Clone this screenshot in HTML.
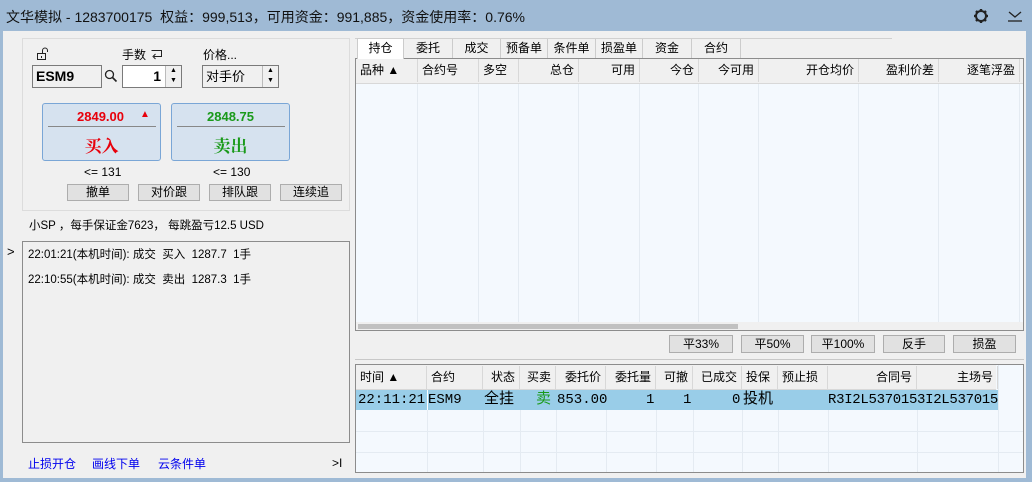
<!DOCTYPE html><html><head><meta charset="utf-8"><style>
*{margin:0;padding:0;box-sizing:border-box}
body{width:1032px;height:482px;background:#9fbad5;font-family:"Liberation Sans","Noto Sans CJK SC",sans-serif;font-size:12px;color:#000;position:relative;overflow:hidden}
.a{position:absolute}
#main{left:3px;top:31px;width:1023px;height:447px;background:#f0f0f0}
.btn{position:absolute;background:#e1e1e1;border:1px solid #adadad;text-align:center;font-size:12px;line-height:15px}
.hdr{position:absolute;height:23px;line-height:23px;border-right:1px solid #d8d8d8;padding:0 4px;white-space:nowrap}
.vl{position:absolute;width:1px;background:#e4ebf2}
.hl{position:absolute;height:1px;background:#e4ebf2}
.mono{font-family:"Liberation Mono","Noto Sans CJK SC",monospace;font-size:14px}
</style></head><body>
<div class="a" style="left:6px;top:7px;font-size:14px;color:#111">文华模拟 - 1283700175&nbsp; 权益：999,513，可用资金：991,885，资金使用率：0.76%</div>
<svg class="a" style="left:972px;top:7px" width="18" height="18" viewBox="0 0 18 18"><circle cx="9" cy="9" r="5" fill="none" stroke="#222" stroke-width="2"/><g stroke="#222" stroke-width="2.4"><line x1="9" y1="2" x2="9" y2="4"/><line x1="9" y1="14" x2="9" y2="16"/><line x1="2" y1="9" x2="4" y2="9"/><line x1="14" y1="9" x2="16" y2="9"/><line x1="4" y1="4" x2="5.4" y2="5.4"/><line x1="12.6" y1="12.6" x2="14" y2="14"/><line x1="14" y1="4" x2="12.6" y2="5.4"/><line x1="4" y1="14" x2="5.4" y2="12.6"/></g></svg>
<svg class="a" style="left:1007px;top:9px" width="16" height="14" viewBox="0 0 16 14"><path d="M2 3 L8 8 L14 3" fill="none" stroke="#222" stroke-width="1.3"/><line x1="1" y1="12" x2="15" y2="12" stroke="#222" stroke-width="1.3"/></svg>
<div class="a" id="main"></div>

<div class="a" style="left:22px;top:38px;width:328px;height:173px;border:1px solid #dcdcdc"></div>
<svg class="a" style="left:36px;top:47px" width="14" height="14" viewBox="0 0 14 14"><rect x="1.5" y="6.5" width="8" height="6" fill="none" stroke="#222"/><path d="M6.5 6.5 V3.5 a2.5 2.5 0 0 1 5 0 V5" fill="none" stroke="#222"/><rect x="5" y="9" width="1" height="2" fill="#222"/></svg>
<div class="a" style="left:122px;top:46px">手数</div>
<svg class="a" style="left:150px;top:49px" width="13" height="12" viewBox="0 0 13 12"><path d="M1.5 1.5 H11.5 V7.5 H4" fill="none" stroke="#222"/><path d="M5.5 5 L3 7.5 L5.5 10" fill="none" stroke="#222"/></svg>
<div class="a" style="left:203px;top:46px">价格...</div>
<div class="a" style="left:32px;top:65px;width:70px;height:23px;border:1px solid #7a7a7a;background:#f0f0f0;font-weight:bold;font-size:14px;line-height:21px;padding-left:3px">ESM9</div>
<svg class="a" style="left:104px;top:69px" width="14" height="14" viewBox="0 0 14 14"><circle cx="5.5" cy="5.5" r="4" fill="none" stroke="#222" stroke-width="1.3"/><line x1="8.5" y1="8.5" x2="12.5" y2="12.5" stroke="#222" stroke-width="1.6"/></svg>
<div class="a" style="left:122px;top:65px;width:60px;height:23px;border:1px solid #7a7a7a;background:#fff;font-weight:bold;font-size:14px;line-height:21px"><span style="position:absolute;right:20px">1</span><div style="position:absolute;right:0;top:0;width:16px;height:21px;background:#f0f0f0;border-left:1px solid #bbb;font-size:7px;line-height:10px;text-align:center">▲<br>▼</div></div>
<div class="a" style="left:202px;top:65px;width:77px;height:23px;border:1px solid #7a7a7a;background:#f0f0f0;line-height:21px;padding-left:3px;font-size:13px">对手价<div style="position:absolute;right:0;top:0;width:16px;height:21px;border-left:1px solid #bbb;font-size:7px;line-height:10px;text-align:center">▲<br>▼</div></div>
<div class="a" style="left:42px;top:103px;width:119px;height:58px;background:#d6e2ef;border:1px solid #7aa6d6;border-radius:3px">
 <div class="a" style="left:34px;top:5px;color:#e8000b;font-weight:bold;font-size:13px">2849.00</div>
 <div class="a" style="left:97px;top:5px;color:#e8000b;font-size:10px">▲</div>
 <div class="a" style="left:5px;top:22px;width:108px;height:1px;background:#888"></div>
 <div class="a" style="left:0;width:117px;top:28px;text-align:center;color:#e8000b;font-size:17px;font-weight:bold;font-family:'Noto Serif CJK SC',serif">买入</div>
</div>
<div class="a" style="left:171px;top:103px;width:119px;height:58px;background:#d6e2ef;border:1px solid #7aa6d6;border-radius:3px">
 <div class="a" style="left:0;width:117px;top:5px;text-align:center;color:#1a9a1a;font-weight:bold;font-size:13px">2848.75</div>
 <div class="a" style="left:5px;top:22px;width:108px;height:1px;background:#888"></div>
 <div class="a" style="left:0;width:117px;top:28px;text-align:center;color:#1a9a1a;font-size:17px;font-weight:bold;font-family:'Noto Serif CJK SC',serif">卖出</div>
</div>
<div class="a" style="left:84px;top:165px">&lt;= 131</div>
<div class="a" style="left:213px;top:165px">&lt;= 130</div>
<div class="btn" style="left:67px;top:184px;width:62px;height:17px">撤单</div>
<div class="btn" style="left:138px;top:184px;width:62px;height:17px">对价跟</div>
<div class="btn" style="left:209px;top:184px;width:62px;height:17px">排队跟</div>
<div class="btn" style="left:280px;top:184px;width:62px;height:17px">连续追</div>
<div class="a" style="left:29px;top:217px;font-size:11.5px">小SP ，每手保证金7623， 每跳盈亏12.5 USD</div>
<div class="a" style="left:7px;top:244px;font-size:13px">&gt;</div>
<div class="a" style="left:22px;top:241px;width:328px;height:202px;border:1px solid #8c8c8c;background:#f0f0f0;font-size:11.5px">
 <div class="a" style="left:5px;top:4px">22:01:21(本机时间): 成交&nbsp; 买入&nbsp; 1287.7&nbsp; 1手</div>
 <div class="a" style="left:5px;top:29px">22:10:55(本机时间): 成交&nbsp; 卖出&nbsp; 1287.3&nbsp; 1手</div>
</div>
<div class="a" style="left:28px;top:455px;color:#0000ee">止损开仓</div>
<div class="a" style="left:92px;top:455px;color:#0000ee">画线下单</div>
<div class="a" style="left:158px;top:455px;color:#0000ee">云条件单</div>
<div class="a" style="left:332px;top:456px">&gt;I</div>

<div class="a" style="left:355px;top:38px;width:537px;height:20px;border-top:1px solid #d0d0d0"></div>
<div class="a" style="left:357px;top:38px;width:47px;height:21px;background:#fff;border:1px solid #ccc;border-bottom:none;text-align:center;line-height:19px;z-index:2">持仓</div>
<div class="a" style="left:404px;top:39px;width:49px;height:19px;text-align:center;line-height:19px;border-right:1px solid #ccc">委托</div>
<div class="a" style="left:453px;top:39px;width:48px;height:19px;text-align:center;line-height:19px;border-right:1px solid #ccc">成交</div>
<div class="a" style="left:501px;top:39px;width:47px;height:19px;text-align:center;line-height:19px;border-right:1px solid #ccc">预备单</div>
<div class="a" style="left:548px;top:39px;width:48px;height:19px;text-align:center;line-height:19px;border-right:1px solid #ccc">条件单</div>
<div class="a" style="left:596px;top:39px;width:47px;height:19px;text-align:center;line-height:19px;border-right:1px solid #ccc">损盈单</div>
<div class="a" style="left:643px;top:39px;width:49px;height:19px;text-align:center;line-height:19px;border-right:1px solid #ccc">资金</div>
<div class="a" style="left:692px;top:39px;width:49px;height:19px;text-align:center;line-height:19px;border-right:1px solid #ccc">合约</div>

<div class="a" style="left:355px;top:58px;width:669px;height:273px;border:1px solid #8c8c8c;background:#f4f9fe;overflow:hidden">
 <div class="a" style="left:0;top:0;width:667px;height:25px;background:#f0f0f0;border-bottom:1px solid #d8d8d8"></div>
 <div class="hdr" style="left:0;width:62px">品种 ▲</div>
 <div class="hdr" style="left:62px;width:61px">合约号</div>
 <div class="hdr" style="left:123px;width:40px">多空</div>
 <div class="hdr" style="left:163px;width:60px;text-align:right">总仓</div>
 <div class="hdr" style="left:223px;width:61px;text-align:right">可用</div>
 <div class="hdr" style="left:284px;width:59px;text-align:right">今仓</div>
 <div class="hdr" style="left:343px;width:60px;text-align:right">今可用</div>
 <div class="hdr" style="left:403px;width:100px;text-align:right">开仓均价</div>
 <div class="hdr" style="left:503px;width:80px;text-align:right">盈利价差</div>
 <div class="hdr" style="left:583px;width:81px;text-align:right">逐笔浮盈</div>
 <div class="vl" style="left:61px;top:25px;height:245px"></div><div class="vl" style="left:122px;top:25px;height:245px"></div><div class="vl" style="left:162px;top:25px;height:245px"></div><div class="vl" style="left:222px;top:25px;height:245px"></div><div class="vl" style="left:283px;top:25px;height:245px"></div><div class="vl" style="left:342px;top:25px;height:245px"></div><div class="vl" style="left:402px;top:25px;height:245px"></div><div class="vl" style="left:502px;top:25px;height:245px"></div><div class="vl" style="left:582px;top:25px;height:245px"></div><div class="vl" style="left:663px;top:25px;height:245px"></div>
 <div class="a" style="left:0;top:263px;width:667px;height:8px;background:#f0f0f0"></div>
 <div class="a" style="left:2px;top:265px;width:380px;height:5px;background:#c1c1c1"></div>
</div>
<div class="btn" style="left:669px;top:335px;width:64px;height:18px;line-height:16px">平33%</div>
<div class="btn" style="left:741px;top:335px;width:63px;height:18px;line-height:16px">平50%</div>
<div class="btn" style="left:811px;top:335px;width:64px;height:18px;line-height:16px">平100%</div>
<div class="btn" style="left:883px;top:335px;width:62px;height:18px;line-height:16px">反手</div>
<div class="btn" style="left:953px;top:335px;width:63px;height:18px;line-height:16px">损盈</div>
<div class="a" style="left:355px;top:359px;width:669px;height:1px;background:#c8c8c8"></div>

<div class="a" style="left:355px;top:364px;width:669px;height:109px;border:1px solid #8c8c8c;background:#f4f9fe;overflow:hidden">
 <div class="a" style="left:0;top:0;width:640px;height:25px;background:#f0f0f0;border-bottom:1px solid #d8d8d8"></div>
 <div class="hdr" style="left:0;top:1px;width:71px">时间 ▲</div>
 <div class="hdr" style="left:71px;top:1px;width:56px">合约</div>
 <div class="hdr" style="left:127px;top:1px;width:37px;text-align:right">状态</div>
 <div class="hdr" style="left:164px;top:1px;width:36px;text-align:right">买卖</div>
 <div class="hdr" style="left:200px;top:1px;width:50px;text-align:right">委托价</div>
 <div class="hdr" style="left:250px;top:1px;width:50px;text-align:right">委托量</div>
 <div class="hdr" style="left:300px;top:1px;width:37px;text-align:right">可撤</div>
 <div class="hdr" style="left:337px;top:1px;width:49px;text-align:right">已成交</div>
 <div class="hdr" style="left:386px;top:1px;width:36px">投保</div>
 <div class="hdr" style="left:422px;top:1px;width:50px">预止损</div>
 <div class="hdr" style="left:472px;top:1px;width:89px;text-align:right">合同号</div>
 <div class="hdr" style="left:561px;top:1px;width:81px;text-align:right">主场号</div>
 <div class="a mono" style="left:0;top:25px;width:642px;height:20px;background:#99cde8;line-height:20px;white-space:nowrap">
  <span class="a" style="left:2px">22:11:21</span><span class="a" style="left:72px">ESM9</span><span class="a" style="left:128px;font-size:15px">全挂</span><span class="a" style="left:180px;color:#1a9a1a;font-size:15px">卖</span><span class="a" style="left:201px">853.00</span><span class="a" style="left:290px">1</span><span class="a" style="left:327px">1</span><span class="a" style="left:376px">0</span><span class="a" style="left:387px;font-size:15px">投机</span><span class="a" style="left:472px;letter-spacing:-0.3px">R3I2L537015</span><span class="a" style="left:561px;letter-spacing:-0.3px">3I2L537015</span>
  <div class="a" style="left:71px;top:0;width:1px;height:20px;background:#fff"></div>
 </div>
 <div class="hl" style="left:0;top:66px;width:667px"></div><div class="hl" style="left:0;top:87px;width:667px"></div>
 <div class="vl" style="left:71px;top:45px;height:62px"></div><div class="vl" style="left:127px;top:45px;height:62px"></div><div class="vl" style="left:164px;top:45px;height:62px"></div><div class="vl" style="left:200px;top:45px;height:62px"></div><div class="vl" style="left:250px;top:45px;height:62px"></div><div class="vl" style="left:300px;top:45px;height:62px"></div><div class="vl" style="left:337px;top:45px;height:62px"></div><div class="vl" style="left:386px;top:45px;height:62px"></div><div class="vl" style="left:422px;top:45px;height:62px"></div><div class="vl" style="left:472px;top:45px;height:62px"></div><div class="vl" style="left:561px;top:45px;height:62px"></div><div class="vl" style="left:642px;top:0;height:107px"></div>
</div>
</body></html>
